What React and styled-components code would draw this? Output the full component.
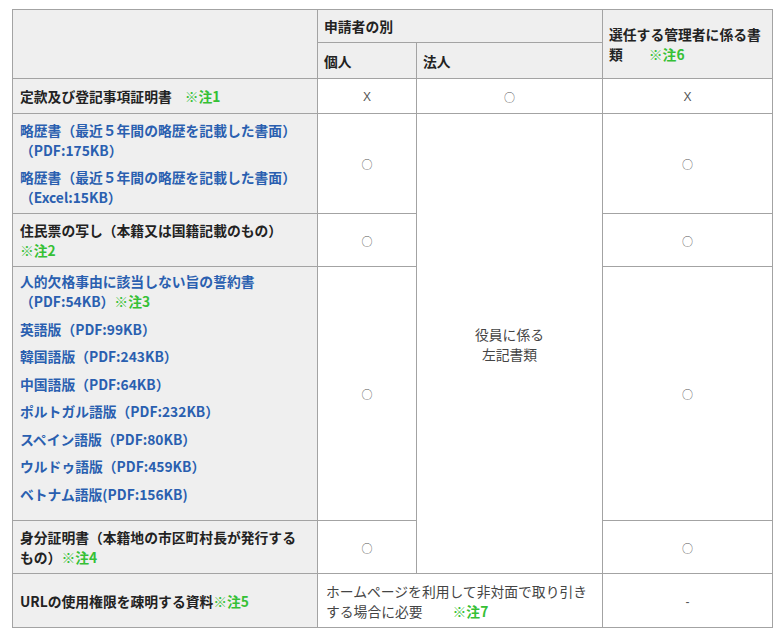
import React from "react";
import styled, { createGlobalStyle } from "styled-components";

const GlobalStyle = createGlobalStyle`
  body {
    margin: 0;
    background: #ffffff;
    font-family: "Noto Sans CJK JP", "Noto Sans", sans-serif;
  }
`;

const Page = styled.div`
  padding: 9px 0 0 12px;
`;

const Table = styled.table`
  width: 760px;
  border-collapse: collapse;
  table-layout: fixed;
  font-size: 13.8px;
  line-height: 20px;
  color: #333;
`;

const Row = styled.tr`
  height: ${(p) => p.h}px;
`;

const Head = styled.th`
  background: #efefef;
  border: 1px solid #a3a3a3;
  padding: 6px 6px;
  text-align: left;
  font-weight: 700;
  color: #222;
  vertical-align: middle;
`;

const Label = styled.th`
  background: #efefef;
  border: 1px solid #a3a3a3;
  padding: ${(p) => (p.top ? "4px" : "6px")} 18px 6px 7px;
  text-align: left;
  vertical-align: ${(p) => (p.top ? "top" : "middle")};
  font-weight: 700;
  color: #222;
`;

const Cell = styled.td`
  border: 1px solid #a3a3a3;
  padding: 6px 8px;
  text-align: ${(p) => (p.left ? "left" : "center")};
  vertical-align: middle;
  color: #444;
  font-weight: 400;
`;

const Mark = styled.span`
  font-family: ${(p) =>
    p.latin ? '"Liberation Sans", sans-serif' : '"Noto Sans CJK JP", sans-serif'};
  font-size: ${(p) => (p.latin ? 12 : 11)}px;
  color: #555;
`;

const Note = styled.span`
  color: #35c035;
  font-weight: 700;
  margin-left: ${(p) => p.gap || 0}px;
`;

const Link = styled.a`
  display: block;
  color: #2a5fb0;
  text-decoration: none;
  font-weight: 700;
  margin-bottom: ${(p) => (p.last ? 0 : p.gap || 7)}px;
`;

const Circle = () => <Mark>○</Mark>;
const Cross = () => <Mark latin>X</Mark>;

const languages = [
  "英語版（PDF:99KB）",
  "韓国語版（PDF:243KB）",
  "中国語版（PDF:64KB）",
  "ポルトガル語版（PDF:232KB）",
  "スペイン語版（PDF:80KB）",
  "ウルドゥ語版（PDF:459KB）",
  "ベトナム語版(PDF:156KB)",
];

export default function App() {
  return (
    <Page>
      <GlobalStyle />
      <Table>
        <colgroup>
          <col style={{ width: 305 }} />
          <col style={{ width: 99 }} />
          <col style={{ width: 186 }} />
          <col style={{ width: 170 }} />
        </colgroup>
        <thead>
          <Row h={33}>
            <Head rowSpan={2} />
            <Head colSpan={2}>申請者の別</Head>
            <Head rowSpan={2}>
              選任する管理者に係る書類
              <Note gap={26}>※注6</Note>
            </Head>
          </Row>
          <Row h={36}>
            <Head>個人</Head>
            <Head>法人</Head>
          </Row>
        </thead>
        <tbody>
          <Row h={34}>
            <Label>
              定款及び登記事項証明書<Note gap={13}>※注1</Note>
            </Label>
            <Cell><Cross /></Cell>
            <Cell><Circle /></Cell>
            <Cell><Cross /></Cell>
          </Row>
          <Row h={100}>
            <Label>
              <Link href="#">略歴書（最近５年間の略歴を記載した書面）（PDF:175KB）</Link>
              <Link href="#" last>略歴書（最近５年間の略歴を記載した書面）（Excel:15KB）</Link>
            </Label>
            <Cell><Circle /></Cell>
            <Cell rowSpan={4}>
              役員に係る
              <br />
              左記書類
            </Cell>
            <Cell><Circle /></Cell>
          </Row>
          <Row h={53}>
            <Label>
              住民票の写し（本籍又は国籍記載のもの）
              <br />
              <Note>※注2</Note>
            </Label>
            <Cell><Circle /></Cell>
            <Cell><Circle /></Cell>
          </Row>
          <Row h={254}>
            <Label top>
              <Link href="#" gap={7.5}>
                人的欠格事由に該当しない旨の誓約書（PDF:54KB）<Note>※注3</Note>
              </Link>
              {languages.map((l, i) => (
                <Link href="#" key={l} gap={7.5} last={i === languages.length - 1}>
                  {l}
                </Link>
              ))}
            </Label>
            <Cell><Circle /></Cell>
            <Cell><Circle /></Cell>
          </Row>
          <Row h={53}>
            <Label>
              身分証明書（本籍地の市区町村長が発行するもの）<Note>※注4</Note>
            </Label>
            <Cell><Circle /></Cell>
            <Cell><Circle /></Cell>
          </Row>
          <Row h={54}>
            <Label>
              URLの使用権限を疎明する資料<Note>※注5</Note>
            </Label>
            <Cell colSpan={2} left>
              ホームページを利用して非対面で取り引きする場合に必要
              <Note gap={30}>※注7</Note>
            </Cell>
            <Cell><Mark latin>-</Mark></Cell>
          </Row>
        </tbody>
      </Table>
    </Page>
  );
}
